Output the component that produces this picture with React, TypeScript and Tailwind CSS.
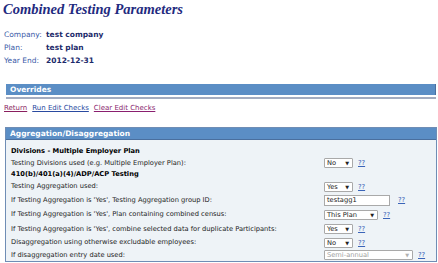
const body = "font-['DejaVu_Sans',Verdana,sans-serif]";

function Sel({ value, w, disabled }: { value: string; w: string; disabled?: boolean }) {
  return (
    <div
      className={`flex h-[10px] items-center justify-between rounded-[1px] border border-[#a9a9a9] bg-white pl-[2px] pr-[3px] text-[6.7px] leading-[8px] ${w} ${
        disabled ? "text-[#a0a0a0]" : "text-[#222]"
      }`}
    >
      <span>{value}</span>
      <span className={`text-[5px] ${disabled ? "text-[#b0b0b0]" : "text-[#222]"}`}>▼</span>
    </div>
  );
}

function Help({ extra = "" }: { extra?: string }) {
  return <a className={`text-[6.7px] leading-[8px] text-[#3a64b8] underline ${extra}`}>??</a>;
}

function Row({ label, children, h }: { label: string; children?: React.ReactNode; h: string }) {
  return (
    <div className={`flex items-center ${h}`}>
      <div className="w-[313px] text-[6.7px] text-[#222]">{label}</div>
      <div className="flex items-center gap-[5px]">{children}</div>
    </div>
  );
}

export default function App() {
  return (
    <div className={`h-[263px] w-[438px] overflow-hidden bg-white ${body}`}>
      <h1 className="pl-[3px] pt-[1px] font-['Liberation_Serif',serif] text-[14.5px] font-bold italic leading-[17px] text-[#1f2b80]">
        Combined Testing Parameters
      </h1>

      <div className="mt-[10px] pl-[4px] text-[7.5px] leading-[13px]">
        <div className="flex">
          <span className="w-[42px] text-[#3b5ba8]">Company:</span>
          <span className="font-bold text-[#1c2a6b]">test company</span>
        </div>
        <div className="flex">
          <span className="w-[42px] text-[#3b5ba8]">Plan:</span>
          <span className="font-bold text-[#1c2a6b]">test plan</span>
        </div>
        <div className="flex">
          <span className="w-[42px] text-[#3b5ba8]">Year End:</span>
          <span className="font-bold text-[#1c2a6b]">2012-12-31</span>
        </div>
      </div>

      <div className="ml-[6px] mr-[2px] mt-[17px] border-b-[2px] border-[#a3acc0] pb-[2px]">
        <div className="h-[11px] border-r border-[#4a6f9e] bg-[#5b8ec5] pl-[4px] text-[7.5px] font-bold leading-[11px] text-white">
          Overrides
        </div>
      </div>

      <div className="mt-[5px] flex h-[9px] items-center gap-[5px] pl-[4px] text-[7px] leading-[9px]">
        <a className="text-[#8a1f5f] underline">Return</a>
        <a className="text-[#2a4aa0] underline">Run Edit Checks</a>
        <a className="text-[#8a1f6f] underline">Clear Edit Checks</a>
      </div>

      <div className="ml-[5px] mr-[1px] mt-[14px] border border-[#6f8db5] bg-[#eef3f7]">
        <div className="h-[12px] border-b border-[#4a6f9e] bg-[#5b8ec5] pl-[4px] text-[7.5px] font-bold leading-[12px] text-white">
          Aggregation/Disaggregation
        </div>
        <div className="pl-[5px] pt-[5px]">
          <div className="flex h-[12px] items-center text-[6.7px] font-bold text-black">
            Divisions - Multiple Employer Plan
          </div>
          <Row label="Testing Divisions used (e.g. Multiple Employer Plan):" h="h-[12px]">
            <Sel value="No" w="w-[29px]" />
            <Help />
          </Row>
          <div className="flex h-[11px] items-center text-[6.7px] font-bold text-black">
            410(b)/401(a)(4)/ADP/ACP Testing
          </div>
          <Row label="Testing Aggregation used:" h="h-[13px]">
            <Sel value="Yes" w="w-[29px]" />
            <Help />
          </Row>
          <Row label="If Testing Aggregation is 'Yes', Testing Aggregation group ID:" h="h-[14px]">
            <div className="flex h-[11px] w-[66px] items-center border border-[#a9a9a9] bg-white pl-[2px] text-[6.7px] leading-[8px] text-[#222]">
              testagg1
            </div>
            <Help extra="ml-[3px]" />
          </Row>
          <Row label="If Testing Aggregation is 'Yes', Plan containing combined census:" h="h-[15px]">
            <Sel value="This Plan" w="w-[54px]" />
            <Help />
          </Row>
          <Row label="If Testing Aggregation is 'Yes', combine selected data for duplicate Participants:" h="h-[14px]">
            <Sel value="Yes" w="w-[29px]" />
            <Help />
          </Row>
          <Row label="Disaggregation using otherwise excludable employees:" h="h-[13px]">
            <Sel value="No" w="w-[29px]" />
            <Help />
          </Row>
          <Row label="If disaggregation entry date used:" h="h-[12px]">
            <Sel value="Semi-annual" w="w-[89px]" disabled />
            <Help />
          </Row>
        </div>
      </div>
    </div>
  );
}
